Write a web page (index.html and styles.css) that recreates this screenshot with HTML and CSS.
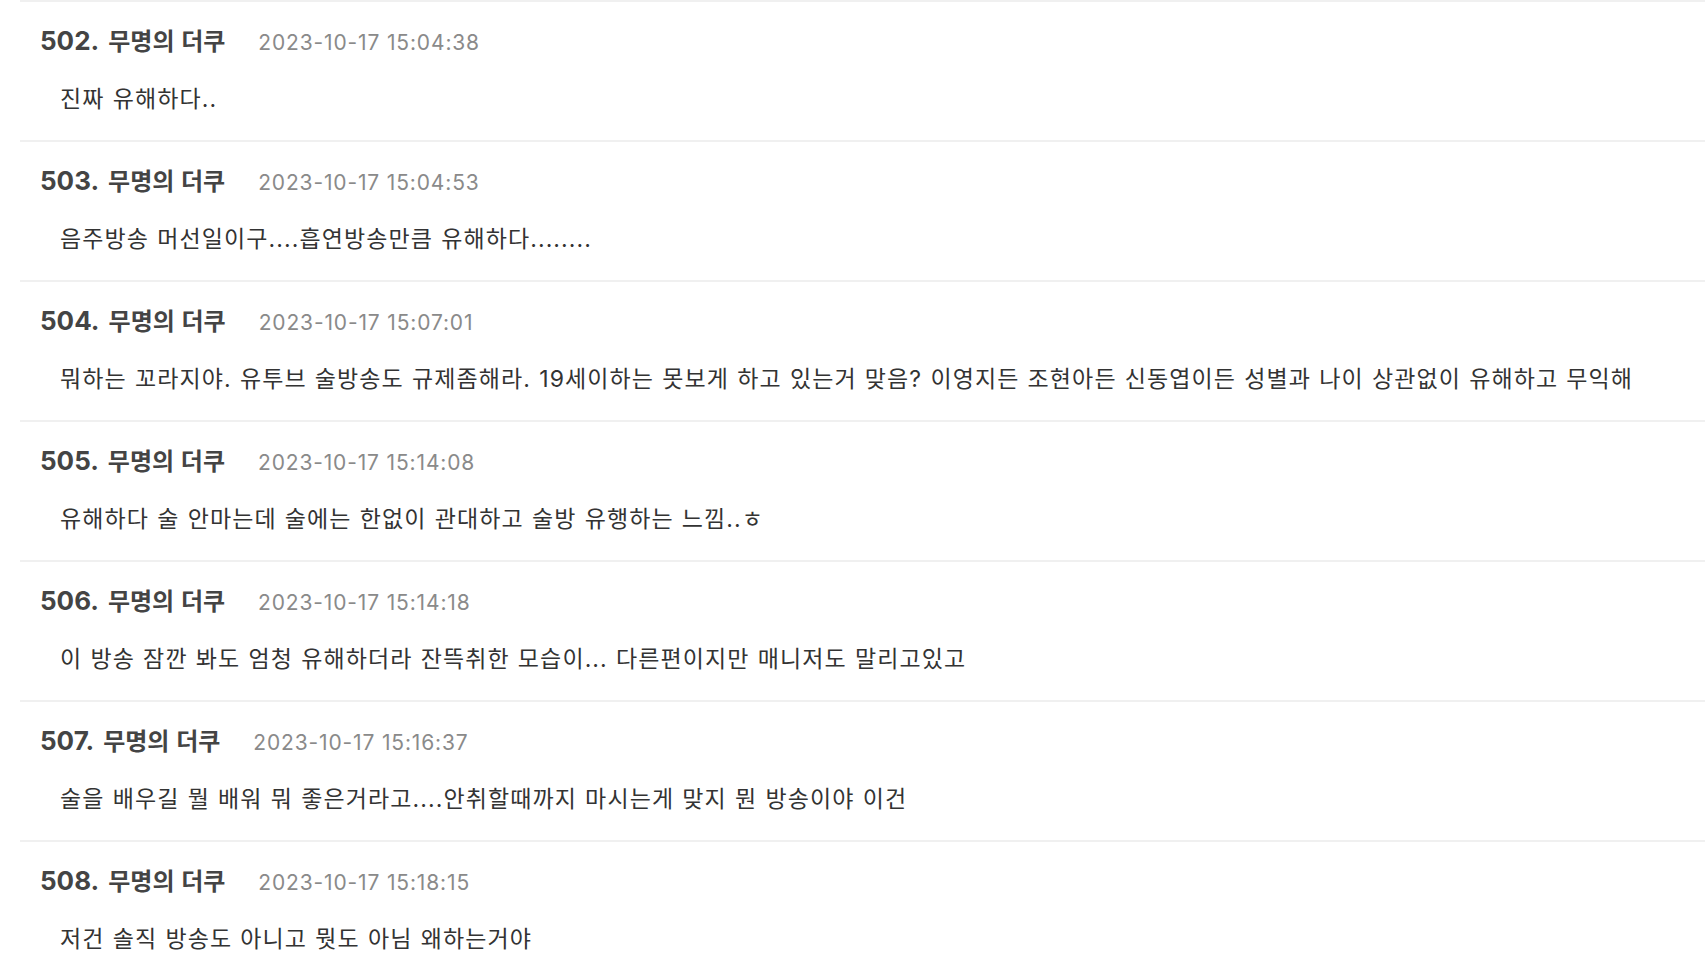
FILE: index.html
```html
<!DOCTYPE html>
<html lang="ko">
<head>
<meta charset="utf-8">
<title>댓글</title>
<link rel="stylesheet" href="styles.css">
</head>
<body>
<ul class="comments">
  <li class="comment">
    <div class="head"><span class="author"><span class="num">502.</span><span class="nick">무명의 더쿠</span></span><span class="date">2023-10-17 15:04:38</span></div>
    <p class="text">진짜 유해하다..</p>
  </li>
  <li class="comment">
    <div class="head"><span class="author"><span class="num">503.</span><span class="nick">무명의 더쿠</span></span><span class="date">2023-10-17 15:04:53</span></div>
    <p class="text">음주방송 머선일이구....흡연방송만큼 유해하다........</p>
  </li>
  <li class="comment">
    <div class="head"><span class="author"><span class="num">504.</span><span class="nick">무명의 더쿠</span></span><span class="date">2023-10-17 15:07:01</span></div>
    <p class="text">뭐하는 꼬라지야. 유투브 술방송도 규제좀해라. 19세이하는 못보게 하고 있는거 맞음? 이영지든 조현아든 신동엽이든 성별과 나이 상관없이 유해하고 무익해</p>
  </li>
  <li class="comment">
    <div class="head"><span class="author"><span class="num">505.</span><span class="nick">무명의 더쿠</span></span><span class="date">2023-10-17 15:14:08</span></div>
    <p class="text">유해하다 술 안마는데 술에는 한없이 관대하고 술방 유행하는 느낌..ㅎ</p>
  </li>
  <li class="comment">
    <div class="head"><span class="author"><span class="num">506.</span><span class="nick">무명의 더쿠</span></span><span class="date">2023-10-17 15:14:18</span></div>
    <p class="text">이 방송 잠깐 봐도 엄청 유해하더라 잔뜩취한 모습이... 다른편이지만 매니저도 말리고있고</p>
  </li>
  <li class="comment">
    <div class="head"><span class="author"><span class="num">507.</span><span class="nick">무명의 더쿠</span></span><span class="date">2023-10-17 15:16:37</span></div>
    <p class="text">술을 배우길 뭘 배워 뭐 좋은거라고....안취할때까지 마시는게 맞지 뭔 방송이야 이건</p>
  </li>
  <li class="comment">
    <div class="head"><span class="author"><span class="num">508.</span><span class="nick">무명의 더쿠</span></span><span class="date">2023-10-17 15:18:15</span></div>
    <p class="text">저건 솔직 방송도 아니고 뭣도 아님 왜하는거야</p>
  </li>
</ul>
</body>
</html>
```

FILE: styles.css
```css
html, body {
  margin: 0;
  padding: 0;
  background: #ffffff;
}

body {
  font-family: "Inter", "Noto Sans CJK KR", sans-serif;
  color: #333333;
  overflow: hidden;
}

.comments {
  list-style: none;
  margin: 0 0 0 20px;
  padding: 0;
}

.comment {
  border-top: 2px solid #f0f0f0;
  height: 138px;
  padding-left: 20px;
  box-sizing: content-box;
}

.head {
  display: flex;
  align-items: baseline;
  gap: 33px;
  padding-top: 23px;
  line-height: 30px;
  white-space: nowrap;
}

.author {
  display: flex;
  align-items: baseline;
  gap: 9px;
  font-weight: 700;
  color: #444444;
}

.num {
  font-family: "Inter", sans-serif;
  font-size: 26px;
}

.nick {
  font-family: "Noto Sans CJK KR", sans-serif;
  font-size: 24px;
}

.date {
  font-size: 21px;
  letter-spacing: 0.85px;
  color: #8a8a8a;
}

.text {
  margin: 0;
  padding: 26px 0 0 20px;
  font-size: 23px;
  letter-spacing: 1.1px;
  word-spacing: 0.6px;
  line-height: 30px;
  white-space: nowrap;
}
```
